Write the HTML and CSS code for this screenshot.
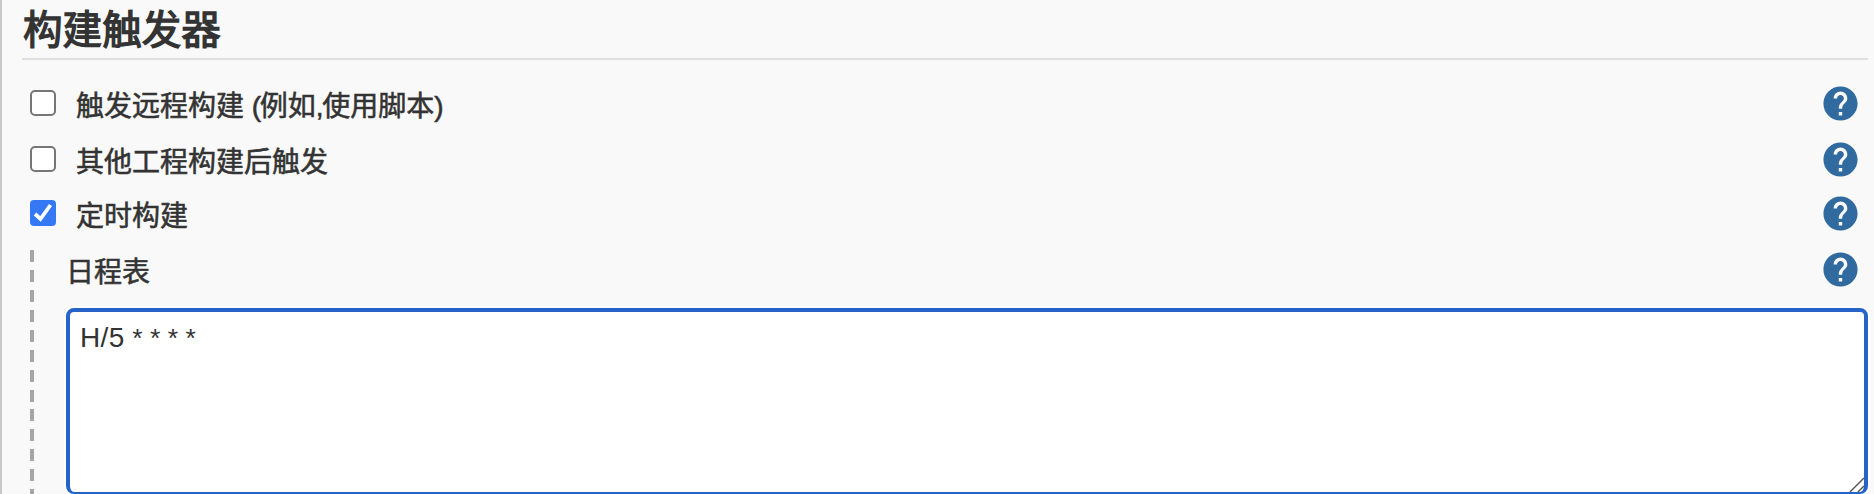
FILE: index.html
```html
<!DOCTYPE html>
<html lang="zh-CN">
<head>
<meta charset="utf-8">
<title>构建触发器</title>
<link rel="stylesheet" href="styles.css">
</head>
<body>
<svg class="defs" width="0" height="0">
  <symbol id="help" viewBox="0 0 24 24">
    <path fill="currentColor" d="M12 2C6.48 2 2 6.48 2 12s4.480 10 10 10 10-4.480 10-10S17.520 2 12 2zm1 17h-2v-2h2v2zm2.070-7.750-.9.920C13.450 12.900 13 13.500 13 15h-2v-.5c0-1.100.450-2.100 1.170-2.830l1.240-1.260c.370-.360.590-.860.590-1.410 0-1.100-.9-2-2-2s-2 .9-2 2H8c0-2.210 1.790-4 4-4s4 1.790 4 4c0 .880-.360 1.680-.930 2.250z"/>
  </symbol>
</svg>
<main class="section">
  <h1 class="title">构建触发器</h1>
  <div class="row row-first">
    <span class="check"></span>
    <span class="label">触发远程构建 <span class="tight">(</span>例如<span class="tight">,</span>使用脚本)</span>
    <svg class="help"><use href="#help"/></svg>
  </div>
  <div class="row row-second">
    <span class="check"></span>
    <span class="label">其他工程构建后触发</span>
    <svg class="help"><use href="#help"/></svg>
  </div>
  <div class="row row-third">
    <span class="check checked"><svg class="tick" viewBox="0 0 26 26"><path d="M5 14 L10.500 19 L20.500 5"/></svg></span>
    <span class="label">定时构建</span>
    <svg class="help"><use href="#help"/></svg>
  </div>
  <div class="nested">
    <div class="row row-schedule">
      <span class="label">日程表</span>
      <svg class="help"><use href="#help"/></svg>
    </div>
    <div class="editor"><span class="spec">H/5</span> * * * *<svg class="grip" viewBox="0 0 16 16"><path d="M1 16 L16 1 M9.500 16 L16 9.500"/></svg></div>
  </div>
</main>
</body>
</html>
```
FILE: styles.css
```css
* { box-sizing: border-box; }
body {
  margin: 0;
  height: 494px;
  overflow: hidden;
  background: #f9f9f9;
  color: #333;
  font-family: "Liberation Sans", "Noto Sans CJK SC", sans-serif;
}
.defs { display: block; height: 0; }
.section {
  height: 494px;
  padding: 0 6px 0 20px;
  border-left: 2px solid #c8c8c8;
}
.title {
  height: 60px;
  margin: 0;
  padding-left: 1px;
  border-bottom: 2px solid #dfdfdf;
  font-size: 39.6px;
  line-height: 60px;
  font-weight: 400;
  -webkit-text-stroke: 1.3px #333;
}
.row {
  display: flex;
  align-items: flex-start;
  height: 56px;
  padding: 0 11px 0 8px;
}
.row-first { margin-top: 27px; }
.row-third { height: 53px; margin-top: -2px; }
.check {
  flex: none;
  width: 26px;
  height: 26px;
  margin-top: 3px;
  border: 2px solid #767676;
  border-radius: 5px;
  background: #fff;
}
.check.checked { border: 0; border-radius: 4px; background: #3478f6; }
.tick {
  display: block;
  width: 26px;
  height: 26px;
  fill: none;
  stroke: #fff;
  stroke-width: 3.8;
}
.label {
  flex: 1;
  margin-left: 20px;
  padding-top: 1px;
  font-size: 28px;
  line-height: 38px;
  font-weight: 400;
  -webkit-text-stroke: 0.55px #333;
  white-space: pre;
}
.tight { letter-spacing: -1.3px; }
.help {
  flex: none;
  width: 41px;
  height: 41px;
  margin: -4px -3.500px 0 0;
  color: #306a9f;
}
.nested {
  height: 244px;
  margin-left: 8px;
  padding-left: 36px;
  background: repeating-linear-gradient(#a6a6a6 0 12px, transparent 12px 19.930px) 0 0 / 4px 100% no-repeat;
}
.row-schedule { height: 58px; padding: 3px 11px 0 0; }
.row-schedule .label { margin-left: 0; }
.editor {
  position: relative;
  height: 186px;
  padding: 10px;
  border: 4px solid #2563c9;
  border-bottom-width: 2px;
  border-radius: 8px;
  background: #fff;
  box-shadow: 0 0 0 2px #fff;
  font-size: 26.600px;
  line-height: 31px;
}
.spec { font-size: 28px; letter-spacing: 0.4px; }
.grip {
  position: absolute;
  right: 0;
  bottom: 0;
  width: 15px;
  height: 15px;
  fill: none;
  stroke: #555;
  stroke-width: 1.500;
}
```
